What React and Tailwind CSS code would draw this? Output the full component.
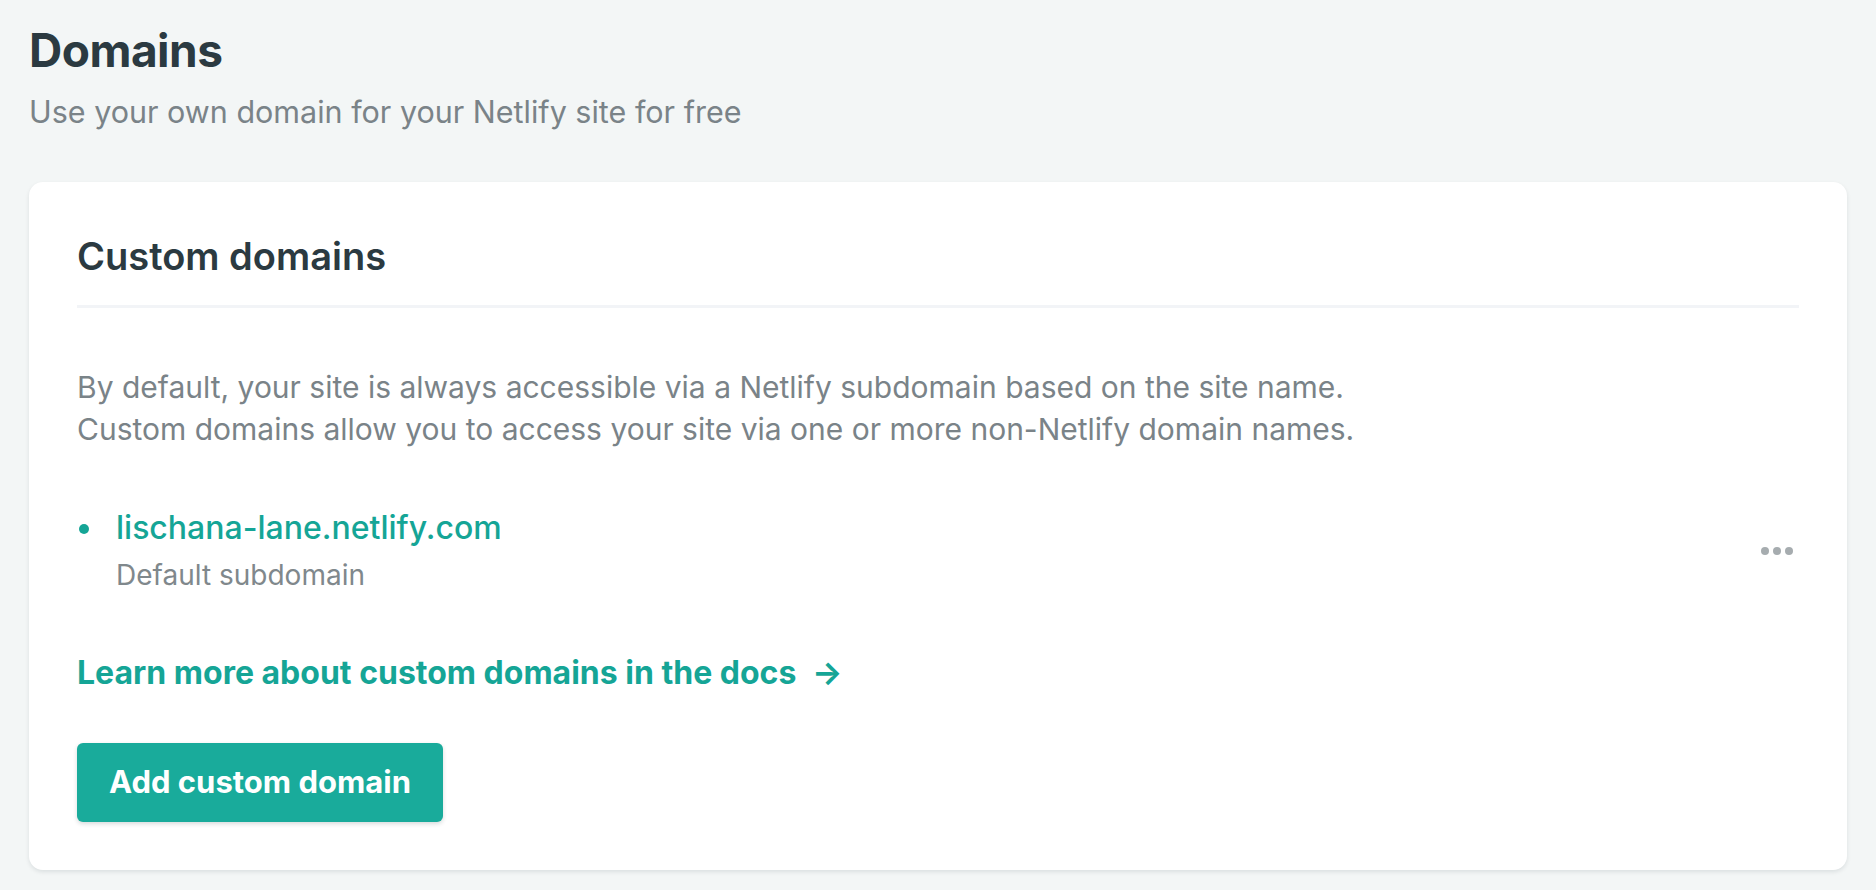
export default function App() {
  return (
    <div className="min-h-screen bg-[#f3f6f6] px-[29px] pt-[22px] pb-[20px] font-['Inter',sans-serif]">
      <h1 className="text-[46px] leading-[56px] font-bold text-[#2b3a41] tracking-[-0.5px]">Domains</h1>
      <p className="mt-[14px] text-[30.5px] leading-[40px] text-[#7a8388]">
        Use your own domain for your Netlify site for free
      </p>

      {/* card */}
      <div className="mt-[50px] bg-white rounded-[14px] shadow-[0_2px_4px_rgba(14,30,37,0.10)] px-[48px] pt-[50px] pb-[48px]">
        <h2 className="text-[38px] leading-[48px] font-semibold text-[#2b3a41] pb-[25px] border-b-[3px] border-[#f2f4f7]">
          Custom domains
        </h2>

        <div className="mt-[58px] text-[30px] leading-[42px] text-[#7a8388]">
          <p>By default, your site is always accessible via a Netlify subdomain based on the site name.</p>
          <p>Custom domains allow you to access your site via one or more non-Netlify domain names.</p>
        </div>

        <ul className="mt-[58px]">
          <li className="flex items-center">
            <div className="flex-1 flex">
              <span className="w-[10px] h-[10px] rounded-full bg-[#15a596] mt-[16px] ml-[2px] mr-[27px] shrink-0"></span>
              <div>
                <div className="text-[32px] leading-[40px] font-medium text-[#15a596]">lischana-lane.netlify.com</div>
                <div className="mt-[9px] text-[28px] leading-[36px] text-[#80888c]">Default subdomain</div>
              </div>
            </div>
            <button className="flex gap-[4px] items-center mr-[6px]">
              <span className="w-[8px] h-[8px] rounded-full bg-[#a6acaf]"></span>
              <span className="w-[8px] h-[8px] rounded-full bg-[#a6acaf]"></span>
              <span className="w-[8px] h-[8px] rounded-full bg-[#a6acaf]"></span>
            </button>
          </li>
        </ul>

        <a href="#" className="block mt-[60px] text-[32px] leading-[40px] font-bold text-[#15a596]">
          Learn more about custom domains in the docs <span className="ml-[8px]">→</span>
        </a>

        <button className="mt-[50px] h-[79px] px-[32px] rounded-[6px] bg-[#19ab9b] text-white text-[31px] font-bold shadow-[0_2px_4px_rgba(14,30,37,0.16)]">
          Add custom domain
        </button>
      </div>
    </div>
  );
}
